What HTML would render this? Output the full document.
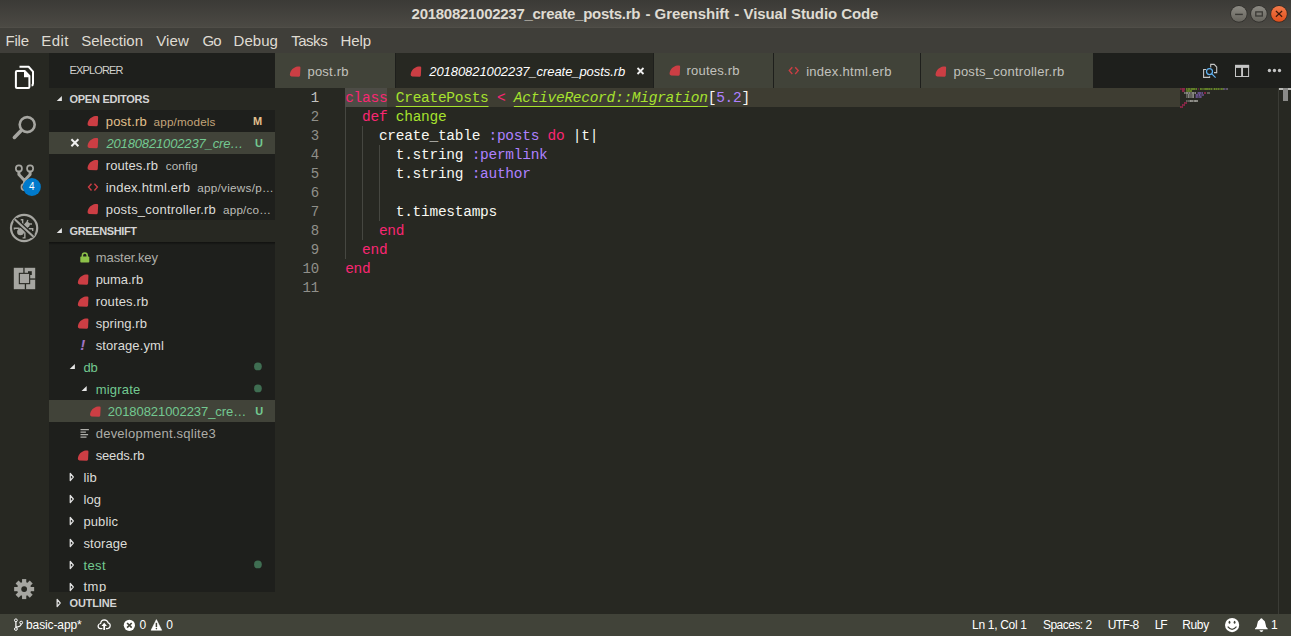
<!DOCTYPE html>
<html><head><meta charset="utf-8"><title>VS Code</title>
<style>
*{box-sizing:border-box;margin:0;padding:0}
html,body{width:1291px;height:637px;overflow:hidden;background:#272822;font-family:"Liberation Sans",sans-serif;}
#root{position:relative;width:1291px;height:637px;overflow:hidden;background:#272822}
.abs{position:absolute;display:block}
</style></head><body><div id="root">
<div class="abs" style="left:0px;top:0px;width:1291px;height:28px;background:linear-gradient(#3b3a36,#4c4a44);"></div>
<div class="abs" style="left:0px;top:27px;width:1291px;height:1px;background:#504e48;"></div>
<div class="abs" style="left:411.60px;top:0px;height:27px;line-height:27px;font:normal bold 15px/27px 'Liberation Sans';letter-spacing:-0.279px;color:#dfdbd2;white-space:pre;">20180821002237_create_posts.rb</div>
<div class="abs" style="left:645.60px;top:0px;height:27px;line-height:27px;font:normal bold 15px/27px 'Liberation Sans';letter-spacing:0.200px;color:#dfdbd2;white-space:pre;">-</div>
<div class="abs" style="left:654.50px;top:0px;height:27px;line-height:27px;font:normal bold 15px/27px 'Liberation Sans';letter-spacing:-0.032px;color:#dfdbd2;white-space:pre;">Greenshift</div>
<div class="abs" style="left:734.30px;top:0px;height:27px;line-height:27px;font:normal bold 15px/27px 'Liberation Sans';letter-spacing:0.200px;color:#dfdbd2;white-space:pre;">-</div>
<div class="abs" style="left:743.50px;top:0px;height:27px;line-height:27px;font:normal bold 15px/27px 'Liberation Sans';letter-spacing:-0.089px;color:#dfdbd2;white-space:pre;">Visual Studio Code</div>
<svg class="abs" style="left:1220px;top:0" width="71" height="28" viewBox="1220 0 71 28"><defs><linearGradient id="gb" x1="0" y1="0" x2="0" y2="1"><stop offset="0" stop-color="#8c8a83"/><stop offset="1" stop-color="#67655e"/></linearGradient><linearGradient id="gc" x1="0" y1="0" x2="0" y2="1"><stop offset="0" stop-color="#f27b4b"/><stop offset="1" stop-color="#e04f1c"/></linearGradient></defs><circle cx="1238.85" cy="13.9" r="8.55" fill="#2d2c29"/><circle cx="1238.85" cy="13.9" r="7.85" fill="url(#gb)"/><circle cx="1258.9" cy="13.9" r="8.55" fill="#2d2c29"/><circle cx="1258.9" cy="13.9" r="7.85" fill="url(#gb)"/><circle cx="1279" cy="13.9" r="8.55" fill="#33271f"/><circle cx="1279" cy="13.9" r="7.85" fill="url(#gc)"/><path d="M1235.1 14.4 H1242.8" stroke="#3a3935" stroke-width="1.4"/><rect x="1255.8" y="11.9" width="6.5" height="4.1" fill="none" stroke="#3a3935" stroke-width="1.3"/><path d="M1275.9 11 L1282.1 16.8 M1282.1 11 L1275.9 16.8" stroke="#3d1a0c" stroke-width="1.2"/></svg>
<div class="abs" style="left:0px;top:28px;width:1291px;height:25px;background:#3f3e39;"></div>
<div class="abs" style="left:5.60px;top:28px;height:25px;line-height:25px;font:normal normal 15px/25px 'Liberation Sans';letter-spacing:-0.243px;color:#dfdbd2;white-space:pre;">File</div>
<div class="abs" style="left:41.20px;top:28px;height:25px;line-height:25px;font:normal normal 15px/25px 'Liberation Sans';letter-spacing:0.435px;color:#dfdbd2;white-space:pre;">Edit</div>
<div class="abs" style="left:81.20px;top:28px;height:25px;line-height:25px;font:normal normal 15px/25px 'Liberation Sans';letter-spacing:0.020px;color:#dfdbd2;white-space:pre;">Selection</div>
<div class="abs" style="left:156.20px;top:28px;height:25px;line-height:25px;font:normal normal 15px/25px 'Liberation Sans';letter-spacing:0.138px;color:#dfdbd2;white-space:pre;">View</div>
<div class="abs" style="left:202.60px;top:28px;height:25px;line-height:25px;font:normal normal 15px/25px 'Liberation Sans';letter-spacing:-1.008px;color:#dfdbd2;white-space:pre;">Go</div>
<div class="abs" style="left:233.60px;top:28px;height:25px;line-height:25px;font:normal normal 15px/25px 'Liberation Sans';letter-spacing:0.039px;color:#dfdbd2;white-space:pre;">Debug</div>
<div class="abs" style="left:291.20px;top:28px;height:25px;line-height:25px;font:normal normal 15px/25px 'Liberation Sans';letter-spacing:-0.469px;color:#dfdbd2;white-space:pre;">Tasks</div>
<div class="abs" style="left:340.50px;top:28px;height:25px;line-height:25px;font:normal normal 15px/25px 'Liberation Sans';letter-spacing:-0.115px;color:#dfdbd2;white-space:pre;">Help</div>
<div class="abs" style="left:0px;top:53px;width:49px;height:561px;background:#272822;"></div>
<div class="abs" style="left:49px;top:53px;width:226px;height:561px;background:#1e1f1c;"></div>
<div class="abs" style="left:69.50px;top:53px;height:35px;line-height:35px;font:normal normal 11px/35px 'Liberation Sans';letter-spacing:-0.853px;color:#d0d0cc;white-space:pre;">EXPLORER</div>
<div class="abs" style="left:49px;top:88px;width:226px;height:22px;background:#272822;"></div>
<svg class="abs" style="left:56px;top:95px;overflow:visible;" width="7" height="7"><g transform="translate(0.50 0.50)"><path d="M5.4 0.4 L5.4 5.4 L0.2 5.4 Z" fill="#e6e6e6"/></g></svg>
<div class="abs" style="left:69.50px;top:88px;height:22px;line-height:22px;font:normal bold 11px/22px 'Liberation Sans';letter-spacing:-0.261px;color:#d4d4d4;white-space:pre;">OPEN EDITORS</div>
<div class="abs" style="left:49px;top:132px;width:226px;height:22px;background:#414339;"></div>
<svg class="abs" style="left:87px;top:115px;overflow:visible;" width="12" height="12"><g transform="translate(0.40 0.80)"><path d="M9.4 0.15 Q10.8 0.05 10.75 1.4 L10.35 9.2 Q10.3 10.4 9.1 10.35 L1.7 10.1 Q0 10 0.15 8.3 C0.7 4 3.8 0.8 8 0.25 Z" fill="#cc3e44"/></g></svg>
<div class="abs" style="left:105.70px;top:111px;height:22px;line-height:22px;font:normal normal 13px/22px 'Liberation Sans';letter-spacing:0.221px;color:#e2c08d;white-space:pre;">post.rb</div>
<div class="abs" style="left:153.60px;top:110.5px;height:22px;line-height:22px;font:normal normal 11.7px/22px 'Liberation Sans';letter-spacing:0.156px;color:rgba(226,192,141,0.85);white-space:pre;">app/models</div>
<div class="abs" style="left:253.00px;top:110px;height:22px;line-height:22px;font:normal bold 11px/22px 'Liberation Sans';letter-spacing:0.228px;color:#e2c08d;white-space:pre;">M</div>
<svg class="abs" style="left:70px;top:138px;overflow:visible;" width="10" height="10"><g transform="translate(0.40 0.30)"><path d="M1 1 L8 8 M8 1 L1 8" stroke="#f0f0f0" stroke-width="2"/></g></svg>
<svg class="abs" style="left:87px;top:137px;overflow:visible;" width="12" height="12"><g transform="translate(0.40 0.80)"><path d="M9.4 0.15 Q10.8 0.05 10.75 1.4 L10.35 9.2 Q10.3 10.4 9.1 10.35 L1.7 10.1 Q0 10 0.15 8.3 C0.7 4 3.8 0.8 8 0.25 Z" fill="#cc3e44"/></g></svg>
<div class="abs" style="left:106.40px;top:133px;height:22px;line-height:22px;font:italic normal 13px/22px 'Liberation Sans';letter-spacing:-0.143px;color:#73c991;white-space:pre;">20180821002237_cre…</div>
<div class="abs" style="left:255.00px;top:132px;height:22px;line-height:22px;font:normal bold 11px/22px 'Liberation Sans';letter-spacing:-0.653px;color:#73c991;white-space:pre;">U</div>
<svg class="abs" style="left:87px;top:159px;overflow:visible;" width="12" height="12"><g transform="translate(0.40 0.80)"><path d="M9.4 0.15 Q10.8 0.05 10.75 1.4 L10.35 9.2 Q10.3 10.4 9.1 10.35 L1.7 10.1 Q0 10 0.15 8.3 C0.7 4 3.8 0.8 8 0.25 Z" fill="#cc3e44"/></g></svg>
<div class="abs" style="left:105.70px;top:155px;height:22px;line-height:22px;font:normal normal 13px/22px 'Liberation Sans';letter-spacing:0.110px;color:#dcdcd8;white-space:pre;">routes.rb</div>
<div class="abs" style="left:165.70px;top:154.5px;height:22px;line-height:22px;font:normal normal 11.7px/22px 'Liberation Sans';letter-spacing:0.149px;color:#bdbdb8;white-space:pre;">config</div>
<svg class="abs" style="left:87px;top:182px;overflow:visible;" width="13" height="10"><g transform="translate(0.50 0.70)"><path d="M4 1 L1 4.4 L4 7.8 M6.9 1 L9.9 4.4 L6.9 7.8" fill="none" stroke="#cc3e44" stroke-width="1.4"/></g></svg>
<div class="abs" style="left:105.70px;top:177px;height:22px;line-height:22px;font:normal normal 13px/22px 'Liberation Sans';letter-spacing:0.210px;color:#dcdcd8;white-space:pre;">index.html.erb</div>
<div class="abs" style="left:197.20px;top:176.5px;height:22px;line-height:22px;font:normal normal 11.7px/22px 'Liberation Sans';letter-spacing:0.282px;color:#bdbdb8;white-space:pre;">app/views/p…</div>
<svg class="abs" style="left:87px;top:203px;overflow:visible;" width="12" height="12"><g transform="translate(0.40 0.80)"><path d="M9.4 0.15 Q10.8 0.05 10.75 1.4 L10.35 9.2 Q10.3 10.4 9.1 10.35 L1.7 10.1 Q0 10 0.15 8.3 C0.7 4 3.8 0.8 8 0.25 Z" fill="#cc3e44"/></g></svg>
<div class="abs" style="left:105.70px;top:199px;height:22px;line-height:22px;font:normal normal 13px/22px 'Liberation Sans';letter-spacing:0.219px;color:#dcdcd8;white-space:pre;">posts_controller.rb</div>
<div class="abs" style="left:223.00px;top:198.5px;height:22px;line-height:22px;font:normal normal 11.7px/22px 'Liberation Sans';letter-spacing:0.203px;color:#bdbdb8;white-space:pre;">app/co…</div>
<div class="abs" style="left:49px;top:220px;width:226px;height:22px;background:#272822;"></div>
<svg class="abs" style="left:56px;top:227px;overflow:visible;" width="7" height="7"><g transform="translate(0.50 0.50)"><path d="M5.4 0.4 L5.4 5.4 L0.2 5.4 Z" fill="#e6e6e6"/></g></svg>
<div class="abs" style="left:69.50px;top:220px;height:22px;line-height:22px;font:normal bold 11px/22px 'Liberation Sans';letter-spacing:-0.371px;color:#d4d4d4;white-space:pre;">GREENSHIFT</div>
<div class="abs" style="left:49px;top:242px;width:226px;height:3px;background:linear-gradient(rgba(0,0,0,0.45),rgba(0,0,0,0));"></div>
<div class="abs" style="left:49px;top:400px;width:226px;height:22px;background:#414339;"></div>
<svg class="abs" style="left:80px;top:252px;overflow:visible;" width="11" height="12"><g transform="translate(0.00 0.00)"><rect x="0.3" y="4.6" width="9" height="6" rx="0.8" fill="#8dc149"/><path d="M2.4 5 V3.4 Q2.4 0.9 4.8 0.9 Q7.2 0.9 7.2 3.4 V5" fill="none" stroke="#8dc149" stroke-width="1.5"/></g></svg>
<div class="abs" style="left:95.70px;top:247px;height:22px;line-height:22px;font:normal normal 13px/22px 'Liberation Sans';letter-spacing:-0.056px;color:#adada8;white-space:pre;">master.key</div>
<svg class="abs" style="left:77px;top:274px;overflow:visible;" width="12" height="12"><g transform="translate(0.70 0.30)"><path d="M9.4 0.15 Q10.8 0.05 10.75 1.4 L10.35 9.2 Q10.3 10.4 9.1 10.35 L1.7 10.1 Q0 10 0.15 8.3 C0.7 4 3.8 0.8 8 0.25 Z" fill="#cc3e44"/></g></svg>
<div class="abs" style="left:95.70px;top:269px;height:22px;line-height:22px;font:normal normal 13px/22px 'Liberation Sans';letter-spacing:-0.043px;color:#dcdcd8;white-space:pre;">puma.rb</div>
<svg class="abs" style="left:77px;top:296px;overflow:visible;" width="12" height="12"><g transform="translate(0.70 0.30)"><path d="M9.4 0.15 Q10.8 0.05 10.75 1.4 L10.35 9.2 Q10.3 10.4 9.1 10.35 L1.7 10.1 Q0 10 0.15 8.3 C0.7 4 3.8 0.8 8 0.25 Z" fill="#cc3e44"/></g></svg>
<div class="abs" style="left:95.70px;top:291px;height:22px;line-height:22px;font:normal normal 13px/22px 'Liberation Sans';letter-spacing:0.154px;color:#dcdcd8;white-space:pre;">routes.rb</div>
<svg class="abs" style="left:77px;top:318px;overflow:visible;" width="12" height="12"><g transform="translate(0.70 0.30)"><path d="M9.4 0.15 Q10.8 0.05 10.75 1.4 L10.35 9.2 Q10.3 10.4 9.1 10.35 L1.7 10.1 Q0 10 0.15 8.3 C0.7 4 3.8 0.8 8 0.25 Z" fill="#cc3e44"/></g></svg>
<div class="abs" style="left:95.70px;top:313px;height:22px;line-height:22px;font:normal normal 13px/22px 'Liberation Sans';letter-spacing:0.080px;color:#dcdcd8;white-space:pre;">spring.rb</div>
<div class="abs" style="left:80.30px;top:334px;height:22px;line-height:22px;font:italic bold 15px/22px 'Liberation Sans';letter-spacing:0.000px;color:#a074c4;white-space:pre;">!</div>
<div class="abs" style="left:95.70px;top:335px;height:22px;line-height:22px;font:normal normal 13px/22px 'Liberation Sans';letter-spacing:0.091px;color:#dcdcd8;white-space:pre;">storage.yml</div>
<svg class="abs" style="left:69px;top:363px;overflow:visible;" width="7" height="7"><g transform="translate(0.50 0.50)"><path d="M5.4 0.4 L5.4 5.4 L0.2 5.4 Z" fill="#e6e6e6"/></g></svg>
<div class="abs" style="left:83.40px;top:357px;height:22px;line-height:22px;font:normal normal 13px/22px 'Liberation Sans';letter-spacing:-0.134px;color:#73c991;white-space:pre;">db</div>
<svg class="abs" style="left:81px;top:385px;overflow:visible;" width="7" height="7"><g transform="translate(0.30 0.50)"><path d="M5.4 0.4 L5.4 5.4 L0.2 5.4 Z" fill="#e6e6e6"/></g></svg>
<div class="abs" style="left:95.70px;top:379px;height:22px;line-height:22px;font:normal normal 13px/22px 'Liberation Sans';letter-spacing:0.192px;color:#73c991;white-space:pre;">migrate</div>
<svg class="abs" style="left:89px;top:406px;overflow:visible;" width="12" height="12"><g transform="translate(0.90 0.30)"><path d="M9.4 0.15 Q10.8 0.05 10.75 1.4 L10.35 9.2 Q10.3 10.4 9.1 10.35 L1.7 10.1 Q0 10 0.15 8.3 C0.7 4 3.8 0.8 8 0.25 Z" fill="#cc3e44"/></g></svg>
<div class="abs" style="left:107.80px;top:401px;height:22px;line-height:22px;font:normal normal 13px/22px 'Liberation Sans';letter-spacing:-0.059px;color:#73c991;white-space:pre;">20180821002237_cre…</div>
<div class="abs" style="left:255.30px;top:400px;height:22px;line-height:22px;font:normal bold 11px/22px 'Liberation Sans';letter-spacing:-0.953px;color:#73c991;white-space:pre;">U</div>
<svg class="abs" style="left:80px;top:429px;overflow:visible;" width="10" height="10"><g transform="translate(0.50 0.00)"><path d="M0 0.6 H8.4 M0 3.1 H5.4 M0 5.6 H7.6 M0 8.1 H6" stroke="#b0b0ab" stroke-width="1.2"/></g></svg>
<div class="abs" style="left:95.70px;top:423px;height:22px;line-height:22px;font:normal normal 13px/22px 'Liberation Sans';letter-spacing:0.240px;color:#adada8;white-space:pre;">development.sqlite3</div>
<svg class="abs" style="left:77px;top:450px;overflow:visible;" width="12" height="12"><g transform="translate(0.70 0.30)"><path d="M9.4 0.15 Q10.8 0.05 10.75 1.4 L10.35 9.2 Q10.3 10.4 9.1 10.35 L1.7 10.1 Q0 10 0.15 8.3 C0.7 4 3.8 0.8 8 0.25 Z" fill="#cc3e44"/></g></svg>
<div class="abs" style="left:95.70px;top:445px;height:22px;line-height:22px;font:normal normal 13px/22px 'Liberation Sans';letter-spacing:-0.159px;color:#dcdcd8;white-space:pre;">seeds.rb</div>
<svg class="abs" style="left:69px;top:472px;overflow:visible;" width="6" height="10"><g transform="translate(0.50 0.50)"><path d="M0.75 0.9 L3.8 4.5 L0.75 8.1 Z" fill="none" stroke="#e0e0e0" stroke-width="1.25" stroke-linejoin="round"/></g></svg>
<div class="abs" style="left:83.40px;top:467px;height:22px;line-height:22px;font:normal normal 13px/22px 'Liberation Sans';letter-spacing:0.228px;color:#dcdcd8;white-space:pre;">lib</div>
<svg class="abs" style="left:69px;top:494px;overflow:visible;" width="6" height="10"><g transform="translate(0.50 0.50)"><path d="M0.75 0.9 L3.8 4.5 L0.75 8.1 Z" fill="none" stroke="#e0e0e0" stroke-width="1.25" stroke-linejoin="round"/></g></svg>
<div class="abs" style="left:83.40px;top:489px;height:22px;line-height:22px;font:normal normal 13px/22px 'Liberation Sans';letter-spacing:0.147px;color:#dcdcd8;white-space:pre;">log</div>
<svg class="abs" style="left:69px;top:516px;overflow:visible;" width="6" height="10"><g transform="translate(0.50 0.50)"><path d="M0.75 0.9 L3.8 4.5 L0.75 8.1 Z" fill="none" stroke="#e0e0e0" stroke-width="1.25" stroke-linejoin="round"/></g></svg>
<div class="abs" style="left:83.40px;top:511px;height:22px;line-height:22px;font:normal normal 13px/22px 'Liberation Sans';letter-spacing:0.122px;color:#dcdcd8;white-space:pre;">public</div>
<svg class="abs" style="left:69px;top:538px;overflow:visible;" width="6" height="10"><g transform="translate(0.50 0.50)"><path d="M0.75 0.9 L3.8 4.5 L0.75 8.1 Z" fill="none" stroke="#e0e0e0" stroke-width="1.25" stroke-linejoin="round"/></g></svg>
<div class="abs" style="left:83.40px;top:533px;height:22px;line-height:22px;font:normal normal 13px/22px 'Liberation Sans';letter-spacing:0.089px;color:#dcdcd8;white-space:pre;">storage</div>
<svg class="abs" style="left:69px;top:560px;overflow:visible;" width="6" height="10"><g transform="translate(0.50 0.50)"><path d="M0.75 0.9 L3.8 4.5 L0.75 8.1 Z" fill="none" stroke="#e0e0e0" stroke-width="1.25" stroke-linejoin="round"/></g></svg>
<div class="abs" style="left:83.40px;top:555px;height:22px;line-height:22px;font:normal normal 13px/22px 'Liberation Sans';letter-spacing:0.408px;color:#73c991;white-space:pre;">test</div>
<div class="abs" style="left:49px;top:576px;width:226px;height:16px;overflow:hidden">
<svg class="abs" style="left:20px;top:6px;overflow:visible;" width="6" height="10"><g transform="translate(0.50 0.50)"><path d="M0.75 0.9 L3.8 4.5 L0.75 8.1 Z" fill="none" stroke="#e0e0e0" stroke-width="1.25" stroke-linejoin="round"/></g></svg>
<div class="abs" style="left:34.40px;top:0px;height:22px;line-height:22px;font:normal normal 13px/22px 'Liberation Sans';letter-spacing:0.609px;color:#dcdcd8;white-space:pre;">tmp</div>
</div>
<svg class="abs" style="left:253px;top:362px;overflow:visible;" width="9" height="9"><g transform="translate(0.90 0.40)"><circle cx="4" cy="4" r="3.9" fill="#3f6e52"/></g></svg>
<svg class="abs" style="left:253px;top:384px;overflow:visible;" width="9" height="9"><g transform="translate(0.90 0.40)"><circle cx="4" cy="4" r="3.9" fill="#3f6e52"/></g></svg>
<svg class="abs" style="left:253px;top:560px;overflow:visible;" width="9" height="9"><g transform="translate(0.90 0.40)"><circle cx="4" cy="4" r="3.9" fill="#3f6e52"/></g></svg>
<div class="abs" style="left:49px;top:592px;width:226px;height:22px;background:#272822;"></div>
<svg class="abs" style="left:56px;top:598px;overflow:visible;" width="6" height="10"><g transform="translate(0.40 0.50)"><path d="M0.75 0.9 L3.8 4.5 L0.75 8.1 Z" fill="none" stroke="#e0e0e0" stroke-width="1.25" stroke-linejoin="round"/></g></svg>
<div class="abs" style="left:69.50px;top:592px;height:22px;line-height:22px;font:normal bold 11px/22px 'Liberation Sans';letter-spacing:-0.154px;color:#d4d4d4;white-space:pre;">OUTLINE</div>
<div class="abs" style="left:275px;top:53px;width:1016px;height:35px;background:#1e1f1c;"></div>
<div class="abs" style="left:275px;top:53px;width:120px;height:35px;background:#414339;"></div>
<div class="abs" style="left:395px;top:53px;width:1px;height:35px;background:#1e1f1c;"></div>
<svg class="abs" style="left:289px;top:66px;overflow:visible;" width="12" height="12"><g transform="translate(0.70 0.30)"><path d="M9.4 0.15 Q10.8 0.05 10.75 1.4 L10.35 9.2 Q10.3 10.4 9.1 10.35 L1.7 10.1 Q0 10 0.15 8.3 C0.7 4 3.8 0.8 8 0.25 Z" fill="#cc3e44"/></g></svg>
<div class="abs" style="left:307.50px;top:54px;height:35px;line-height:35px;font:normal normal 13px/35px 'Liberation Sans';letter-spacing:0.207px;color:#c2c2be;white-space:pre;">post.rb</div>
<div class="abs" style="left:396px;top:53px;width:257px;height:35px;background:#272822;"></div>
<div class="abs" style="left:653px;top:53px;width:1px;height:35px;background:#1e1f1c;"></div>
<svg class="abs" style="left:410px;top:66px;overflow:visible;" width="12" height="12"><g transform="translate(0.50 0.30)"><path d="M9.4 0.15 Q10.8 0.05 10.75 1.4 L10.35 9.2 Q10.3 10.4 9.1 10.35 L1.7 10.1 Q0 10 0.15 8.3 C0.7 4 3.8 0.8 8 0.25 Z" fill="#cc3e44"/></g></svg>
<div class="abs" style="left:429.30px;top:54px;height:35px;line-height:35px;font:italic normal 13px/35px 'Liberation Sans';letter-spacing:-0.075px;color:#ffffff;white-space:pre;">20180821002237_create_posts.rb</div>
<svg class="abs" style="left:636px;top:67px;overflow:visible;" width="9" height="9"><g transform="translate(0.50 0.00)"><path d="M1 1 L7 7 M7 1 L1 7" stroke="#f0f0f0" stroke-width="1.8"/></g></svg>
<div class="abs" style="left:654px;top:53px;width:119px;height:35px;background:#414339;"></div>
<svg class="abs" style="left:669px;top:65px;overflow:visible;" width="12" height="12"><g transform="translate(0.40 0.30)"><path d="M9.4 0.15 Q10.8 0.05 10.75 1.4 L10.35 9.2 Q10.3 10.4 9.1 10.35 L1.7 10.1 Q0 10 0.15 8.3 C0.7 4 3.8 0.8 8 0.25 Z" fill="#cc3e44"/></g></svg>
<div class="abs" style="left:686.50px;top:53px;height:35px;line-height:35px;font:normal normal 13px/35px 'Liberation Sans';letter-spacing:0.199px;color:#c2c2be;white-space:pre;">routes.rb</div>
<div class="abs" style="left:774px;top:53px;width:146px;height:35px;background:#414339;"></div>
<svg class="abs" style="left:788px;top:66px;overflow:visible;" width="13" height="10"><g transform="translate(0.30 0.20)"><path d="M4 1 L1 4.4 L4 7.8 M6.9 1 L9.9 4.4 L6.9 7.8" fill="none" stroke="#cc3e44" stroke-width="1.4"/></g></svg>
<div class="abs" style="left:806.20px;top:54px;height:35px;line-height:35px;font:normal normal 13px/35px 'Liberation Sans';letter-spacing:0.275px;color:#c2c2be;white-space:pre;">index.html.erb</div>
<div class="abs" style="left:921px;top:53px;width:172px;height:35px;background:#414339;"></div>
<svg class="abs" style="left:935px;top:66px;overflow:visible;" width="12" height="12"><g transform="translate(0.40 0.30)"><path d="M9.4 0.15 Q10.8 0.05 10.75 1.4 L10.35 9.2 Q10.3 10.4 9.1 10.35 L1.7 10.1 Q0 10 0.15 8.3 C0.7 4 3.8 0.8 8 0.25 Z" fill="#cc3e44"/></g></svg>
<div class="abs" style="left:953.40px;top:54px;height:35px;line-height:35px;font:normal normal 13px/35px 'Liberation Sans';letter-spacing:0.261px;color:#c2c2be;white-space:pre;">posts_controller.rb</div>
<div class="abs" style="left:345px;top:88px;width:835px;height:19px;background:#3e3d32;"></div>
<div class="abs" style="left:345px;top:88px;width:42px;height:19px;background:#4d4c46;"></div>
<div class="abs" style="left:345px;top:107px;width:1px;height:152px;background:#464741;"></div>
<div class="abs" style="left:362px;top:126px;width:1px;height:114px;background:#464741;"></div>
<div class="abs" style="left:379px;top:145px;width:1px;height:76px;background:#464741;"></div>
<div class="abs" style="left:275px;width:44.2px;top:89px;text-align:right;font:14px/19px 'Liberation Mono';color:#c2c2bf">1</div>
<div class="abs" style="left:275px;width:44.2px;top:108px;text-align:right;font:14px/19px 'Liberation Mono';color:#90908a">2</div>
<div class="abs" style="left:275px;width:44.2px;top:127px;text-align:right;font:14px/19px 'Liberation Mono';color:#90908a">3</div>
<div class="abs" style="left:275px;width:44.2px;top:146px;text-align:right;font:14px/19px 'Liberation Mono';color:#90908a">4</div>
<div class="abs" style="left:275px;width:44.2px;top:165px;text-align:right;font:14px/19px 'Liberation Mono';color:#90908a">5</div>
<div class="abs" style="left:275px;width:44.2px;top:184px;text-align:right;font:14px/19px 'Liberation Mono';color:#90908a">6</div>
<div class="abs" style="left:275px;width:44.2px;top:203px;text-align:right;font:14px/19px 'Liberation Mono';color:#90908a">7</div>
<div class="abs" style="left:275px;width:44.2px;top:222px;text-align:right;font:14px/19px 'Liberation Mono';color:#90908a">8</div>
<div class="abs" style="left:275px;width:44.2px;top:241px;text-align:right;font:14px/19px 'Liberation Mono';color:#90908a">9</div>
<div class="abs" style="left:275px;width:44.2px;top:260px;text-align:right;font:14px/19px 'Liberation Mono';color:#90908a">10</div>
<div class="abs" style="left:275px;width:44.2px;top:279px;text-align:right;font:14px/19px 'Liberation Mono';color:#90908a">11</div>
<div class="abs" style="left:345.2px;top:89px;font:14.5px/19px 'Liberation Mono';letter-spacing:-0.272px;white-space:pre;color:#f8f8f2"><span style="color:#f92672;">class</span> <span style="color:#a6e22e;text-decoration:underline;text-underline-offset:4px;text-decoration-thickness:1px;">CreatePosts</span> <span style="color:#f92672;">&lt;</span> <span style="color:#a6e22e;font-style:italic;text-decoration:underline;text-underline-offset:4px;text-decoration-thickness:1px;">ActiveRecord::Migration</span><span style="color:#f8f8f2;">[</span><span style="color:#ae81ff;">5.2</span><span style="color:#f8f8f2;">]</span></div>
<div class="abs" style="left:345.2px;top:108px;font:14.5px/19px 'Liberation Mono';letter-spacing:-0.272px;white-space:pre;color:#f8f8f2">  <span style="color:#f92672;">def</span> <span style="color:#a6e22e;">change</span></div>
<div class="abs" style="left:345.2px;top:127px;font:14.5px/19px 'Liberation Mono';letter-spacing:-0.272px;white-space:pre;color:#f8f8f2">    <span style="color:#f8f8f2;">create_table </span><span style="color:#ae81ff;">:posts</span> <span style="color:#f92672;">do</span><span style="color:#f8f8f2;"> |t|</span></div>
<div class="abs" style="left:345.2px;top:146px;font:14.5px/19px 'Liberation Mono';letter-spacing:-0.272px;white-space:pre;color:#f8f8f2">      <span style="color:#f8f8f2;">t.string </span><span style="color:#ae81ff;">:permlink</span></div>
<div class="abs" style="left:345.2px;top:165px;font:14.5px/19px 'Liberation Mono';letter-spacing:-0.272px;white-space:pre;color:#f8f8f2">      <span style="color:#f8f8f2;">t.string </span><span style="color:#ae81ff;">:author</span></div>
<div class="abs" style="left:345.2px;top:184px;font:14.5px/19px 'Liberation Mono';letter-spacing:-0.272px;white-space:pre;color:#f8f8f2"></div>
<div class="abs" style="left:345.2px;top:203px;font:14.5px/19px 'Liberation Mono';letter-spacing:-0.272px;white-space:pre;color:#f8f8f2">      <span style="color:#f8f8f2;">t.timestamps</span></div>
<div class="abs" style="left:345.2px;top:222px;font:14.5px/19px 'Liberation Mono';letter-spacing:-0.272px;white-space:pre;color:#f8f8f2">    <span style="color:#f92672;">end</span></div>
<div class="abs" style="left:345.2px;top:241px;font:14.5px/19px 'Liberation Mono';letter-spacing:-0.272px;white-space:pre;color:#f8f8f2">  <span style="color:#f92672;">end</span></div>
<div class="abs" style="left:345.2px;top:260px;font:14.5px/19px 'Liberation Mono';letter-spacing:-0.272px;white-space:pre;color:#f8f8f2"><span style="color:#f92672;">end</span></div>
<div class="abs" style="left:345.2px;top:279px;font:14.5px/19px 'Liberation Mono';letter-spacing:-0.272px;white-space:pre;color:#f8f8f2"></div>
<svg class="abs" style="left:1180px;top:88px" width="60" height="22" viewBox="0 0 60 22" shape-rendering="crispEdges"><rect x="0" y="0" width="1" height="2" fill="#f92672" opacity="0.37"/><rect x="1" y="0" width="1" height="2" fill="#f92672" opacity="0.28"/><rect x="2" y="0" width="1" height="2" fill="#f92672" opacity="0.46"/><rect x="3" y="0" width="1" height="2" fill="#f92672" opacity="0.46"/><rect x="4" y="0" width="1" height="2" fill="#f92672" opacity="0.46"/><rect x="6" y="0" width="1" height="2" fill="#a6e22e" opacity="0.46"/><rect x="7" y="0" width="1" height="2" fill="#a6e22e" opacity="0.28"/><rect x="8" y="0" width="1" height="2" fill="#a6e22e" opacity="0.46"/><rect x="9" y="0" width="1" height="2" fill="#a6e22e" opacity="0.46"/><rect x="10" y="0" width="1" height="2" fill="#a6e22e" opacity="0.28"/><rect x="11" y="0" width="1" height="2" fill="#a6e22e" opacity="0.46"/><rect x="12" y="0" width="1" height="2" fill="#a6e22e" opacity="0.46"/><rect x="13" y="0" width="1" height="2" fill="#a6e22e" opacity="0.46"/><rect x="14" y="0" width="1" height="2" fill="#a6e22e" opacity="0.46"/><rect x="15" y="0" width="1" height="2" fill="#a6e22e" opacity="0.28"/><rect x="16" y="0" width="1" height="2" fill="#a6e22e" opacity="0.46"/><rect x="18" y="0" width="1" height="2" fill="#f92672" opacity="0.28"/><rect x="20" y="0" width="1" height="2" fill="#a6e22e" opacity="0.46"/><rect x="21" y="0" width="1" height="2" fill="#a6e22e" opacity="0.37"/><rect x="22" y="0" width="1" height="2" fill="#a6e22e" opacity="0.28"/><rect x="23" y="0" width="1" height="2" fill="#a6e22e" opacity="0.28"/><rect x="24" y="0" width="1" height="2" fill="#a6e22e" opacity="0.37"/><rect x="25" y="0" width="1" height="2" fill="#a6e22e" opacity="0.46"/><rect x="26" y="0" width="1" height="2" fill="#a6e22e" opacity="0.46"/><rect x="27" y="0" width="1" height="2" fill="#a6e22e" opacity="0.46"/><rect x="28" y="0" width="1" height="2" fill="#a6e22e" opacity="0.37"/><rect x="29" y="0" width="1" height="2" fill="#a6e22e" opacity="0.46"/><rect x="30" y="0" width="1" height="2" fill="#a6e22e" opacity="0.28"/><rect x="31" y="0" width="1" height="2" fill="#a6e22e" opacity="0.46"/><rect x="32" y="0" width="1" height="2" fill="#a6e22e" opacity="0.19"/><rect x="33" y="0" width="1" height="2" fill="#a6e22e" opacity="0.19"/><rect x="34" y="0" width="1" height="2" fill="#a6e22e" opacity="0.53"/><rect x="35" y="0" width="1" height="2" fill="#a6e22e" opacity="0.28"/><rect x="36" y="0" width="1" height="2" fill="#a6e22e" opacity="0.46"/><rect x="37" y="0" width="1" height="2" fill="#a6e22e" opacity="0.28"/><rect x="38" y="0" width="1" height="2" fill="#a6e22e" opacity="0.46"/><rect x="39" y="0" width="1" height="2" fill="#a6e22e" opacity="0.28"/><rect x="40" y="0" width="1" height="2" fill="#a6e22e" opacity="0.28"/><rect x="41" y="0" width="1" height="2" fill="#a6e22e" opacity="0.46"/><rect x="42" y="0" width="1" height="2" fill="#a6e22e" opacity="0.37"/><rect x="43" y="0" width="1" height="2" fill="#f8f8f2" opacity="0.28"/><rect x="44" y="0" width="1" height="2" fill="#ae81ff" opacity="0.37"/><rect x="45" y="0" width="1" height="2" fill="#ae81ff" opacity="0.19"/><rect x="46" y="0" width="1" height="2" fill="#ae81ff" opacity="0.37"/><rect x="47" y="0" width="1" height="2" fill="#f8f8f2" opacity="0.28"/><rect x="2" y="2" width="1" height="2" fill="#f92672" opacity="0.46"/><rect x="3" y="2" width="1" height="2" fill="#f92672" opacity="0.46"/><rect x="4" y="2" width="1" height="2" fill="#f92672" opacity="0.28"/><rect x="6" y="2" width="1" height="2" fill="#a6e22e" opacity="0.37"/><rect x="7" y="2" width="1" height="2" fill="#a6e22e" opacity="0.37"/><rect x="8" y="2" width="1" height="2" fill="#a6e22e" opacity="0.46"/><rect x="9" y="2" width="1" height="2" fill="#a6e22e" opacity="0.37"/><rect x="10" y="2" width="1" height="2" fill="#a6e22e" opacity="0.46"/><rect x="11" y="2" width="1" height="2" fill="#a6e22e" opacity="0.46"/><rect x="4" y="4" width="1" height="2" fill="#f8f8f2" opacity="0.37"/><rect x="5" y="4" width="1" height="2" fill="#f8f8f2" opacity="0.28"/><rect x="6" y="4" width="1" height="2" fill="#f8f8f2" opacity="0.46"/><rect x="7" y="4" width="1" height="2" fill="#f8f8f2" opacity="0.46"/><rect x="8" y="4" width="1" height="2" fill="#f8f8f2" opacity="0.28"/><rect x="9" y="4" width="1" height="2" fill="#f8f8f2" opacity="0.46"/><rect x="10" y="4" width="1" height="2" fill="#f8f8f2" opacity="0.28"/><rect x="11" y="4" width="1" height="2" fill="#f8f8f2" opacity="0.28"/><rect x="12" y="4" width="1" height="2" fill="#f8f8f2" opacity="0.46"/><rect x="13" y="4" width="1" height="2" fill="#f8f8f2" opacity="0.46"/><rect x="14" y="4" width="1" height="2" fill="#f8f8f2" opacity="0.28"/><rect x="15" y="4" width="1" height="2" fill="#f8f8f2" opacity="0.46"/><rect x="17" y="4" width="1" height="2" fill="#ae81ff" opacity="0.19"/><rect x="18" y="4" width="1" height="2" fill="#ae81ff" opacity="0.46"/><rect x="19" y="4" width="1" height="2" fill="#ae81ff" opacity="0.46"/><rect x="20" y="4" width="1" height="2" fill="#ae81ff" opacity="0.46"/><rect x="21" y="4" width="1" height="2" fill="#ae81ff" opacity="0.28"/><rect x="22" y="4" width="1" height="2" fill="#ae81ff" opacity="0.46"/><rect x="24" y="4" width="1" height="2" fill="#f92672" opacity="0.46"/><rect x="25" y="4" width="1" height="2" fill="#f92672" opacity="0.46"/><rect x="27" y="4" width="1" height="2" fill="#f8f8f2" opacity="0.28"/><rect x="28" y="4" width="1" height="2" fill="#f8f8f2" opacity="0.28"/><rect x="29" y="4" width="1" height="2" fill="#f8f8f2" opacity="0.28"/><rect x="6" y="6" width="1" height="2" fill="#f8f8f2" opacity="0.28"/><rect x="7" y="6" width="1" height="2" fill="#f8f8f2" opacity="0.19"/><rect x="8" y="6" width="1" height="2" fill="#f8f8f2" opacity="0.46"/><rect x="9" y="6" width="1" height="2" fill="#f8f8f2" opacity="0.28"/><rect x="10" y="6" width="1" height="2" fill="#f8f8f2" opacity="0.28"/><rect x="11" y="6" width="1" height="2" fill="#f8f8f2" opacity="0.28"/><rect x="12" y="6" width="1" height="2" fill="#f8f8f2" opacity="0.37"/><rect x="13" y="6" width="1" height="2" fill="#f8f8f2" opacity="0.46"/><rect x="15" y="6" width="1" height="2" fill="#ae81ff" opacity="0.19"/><rect x="16" y="6" width="1" height="2" fill="#ae81ff" opacity="0.46"/><rect x="17" y="6" width="1" height="2" fill="#ae81ff" opacity="0.46"/><rect x="18" y="6" width="1" height="2" fill="#ae81ff" opacity="0.28"/><rect x="19" y="6" width="1" height="2" fill="#ae81ff" opacity="0.53"/><rect x="20" y="6" width="1" height="2" fill="#ae81ff" opacity="0.28"/><rect x="21" y="6" width="1" height="2" fill="#ae81ff" opacity="0.28"/><rect x="22" y="6" width="1" height="2" fill="#ae81ff" opacity="0.37"/><rect x="23" y="6" width="1" height="2" fill="#ae81ff" opacity="0.37"/><rect x="6" y="8" width="1" height="2" fill="#f8f8f2" opacity="0.28"/><rect x="7" y="8" width="1" height="2" fill="#f8f8f2" opacity="0.19"/><rect x="8" y="8" width="1" height="2" fill="#f8f8f2" opacity="0.46"/><rect x="9" y="8" width="1" height="2" fill="#f8f8f2" opacity="0.28"/><rect x="10" y="8" width="1" height="2" fill="#f8f8f2" opacity="0.28"/><rect x="11" y="8" width="1" height="2" fill="#f8f8f2" opacity="0.28"/><rect x="12" y="8" width="1" height="2" fill="#f8f8f2" opacity="0.37"/><rect x="13" y="8" width="1" height="2" fill="#f8f8f2" opacity="0.46"/><rect x="15" y="8" width="1" height="2" fill="#ae81ff" opacity="0.19"/><rect x="16" y="8" width="1" height="2" fill="#ae81ff" opacity="0.46"/><rect x="17" y="8" width="1" height="2" fill="#ae81ff" opacity="0.37"/><rect x="18" y="8" width="1" height="2" fill="#ae81ff" opacity="0.28"/><rect x="19" y="8" width="1" height="2" fill="#ae81ff" opacity="0.37"/><rect x="20" y="8" width="1" height="2" fill="#ae81ff" opacity="0.46"/><rect x="21" y="8" width="1" height="2" fill="#ae81ff" opacity="0.28"/><rect x="6" y="12" width="1" height="2" fill="#f8f8f2" opacity="0.28"/><rect x="7" y="12" width="1" height="2" fill="#f8f8f2" opacity="0.19"/><rect x="8" y="12" width="1" height="2" fill="#f8f8f2" opacity="0.28"/><rect x="9" y="12" width="1" height="2" fill="#f8f8f2" opacity="0.28"/><rect x="10" y="12" width="1" height="2" fill="#f8f8f2" opacity="0.53"/><rect x="11" y="12" width="1" height="2" fill="#f8f8f2" opacity="0.46"/><rect x="12" y="12" width="1" height="2" fill="#f8f8f2" opacity="0.46"/><rect x="13" y="12" width="1" height="2" fill="#f8f8f2" opacity="0.28"/><rect x="14" y="12" width="1" height="2" fill="#f8f8f2" opacity="0.46"/><rect x="15" y="12" width="1" height="2" fill="#f8f8f2" opacity="0.53"/><rect x="16" y="12" width="1" height="2" fill="#f8f8f2" opacity="0.46"/><rect x="17" y="12" width="1" height="2" fill="#f8f8f2" opacity="0.46"/><rect x="4" y="14" width="1" height="2" fill="#f92672" opacity="0.46"/><rect x="5" y="14" width="1" height="2" fill="#f92672" opacity="0.37"/><rect x="6" y="14" width="1" height="2" fill="#f92672" opacity="0.46"/><rect x="2" y="16" width="1" height="2" fill="#f92672" opacity="0.46"/><rect x="3" y="16" width="1" height="2" fill="#f92672" opacity="0.37"/><rect x="4" y="16" width="1" height="2" fill="#f92672" opacity="0.46"/><rect x="0" y="18" width="1" height="2" fill="#f92672" opacity="0.46"/><rect x="1" y="18" width="1" height="2" fill="#f92672" opacity="0.37"/><rect x="2" y="18" width="1" height="2" fill="#f92672" opacity="0.46"/></svg>
<div class="abs" style="left:1278px;top:88px;width:1px;height:526px;background:#3b3c36;"></div>
<div class="abs" style="left:1279px;top:88px;width:12px;height:2px;background:#b9b9b6;"></div>
<div class="abs" style="left:1283px;top:88px;width:5px;height:13px;background:#8a8a88;"></div>
<div class="abs" style="left:0px;top:614px;width:1291px;height:22px;background:#414339;"></div>
<div class="abs" style="left:0px;top:636px;width:1291px;height:1px;background:#ffffff;"></div>
<div class="abs" style="left:26.00px;top:614px;height:22px;line-height:22px;font:normal normal 12px/22px 'Liberation Sans';letter-spacing:-0.110px;color:#ffffff;white-space:pre;">basic-app*</div>
<div class="abs" style="left:139.40px;top:614px;height:22px;line-height:22px;font:normal normal 12px/22px 'Liberation Sans';letter-spacing:-0.888px;color:#ffffff;white-space:pre;">0</div>
<div class="abs" style="left:166.20px;top:614px;height:22px;line-height:22px;font:normal normal 12px/22px 'Liberation Sans';letter-spacing:-0.887px;color:#ffffff;white-space:pre;">0</div>
<div class="abs" style="left:972.10px;top:614px;height:22px;line-height:22px;font:normal normal 12px/22px 'Liberation Sans';letter-spacing:-0.322px;color:#ffffff;white-space:pre;">Ln 1, Col 1</div>
<div class="abs" style="left:1042.90px;top:614px;height:22px;line-height:22px;font:normal normal 12px/22px 'Liberation Sans';letter-spacing:-0.508px;color:#ffffff;white-space:pre;">Spaces: 2</div>
<div class="abs" style="left:1107.70px;top:614px;height:22px;line-height:22px;font:normal normal 12px/22px 'Liberation Sans';letter-spacing:-0.620px;color:#ffffff;white-space:pre;">UTF-8</div>
<div class="abs" style="left:1154.70px;top:614px;height:22px;line-height:22px;font:normal normal 12px/22px 'Liberation Sans';letter-spacing:-1.108px;color:#ffffff;white-space:pre;">LF</div>
<div class="abs" style="left:1182.20px;top:614px;height:22px;line-height:22px;font:normal normal 12px/22px 'Liberation Sans';letter-spacing:-0.329px;color:#ffffff;white-space:pre;">Ruby</div>
<div class="abs" style="left:1271.00px;top:614px;height:22px;line-height:22px;font:normal normal 12px/22px 'Liberation Sans';letter-spacing:-2.188px;color:#ffffff;white-space:pre;">1</div>
<svg class="abs" style="left:0;top:0" width="1291" height="637" viewBox="0 0 1291 637">
<!-- files icon -->
<g fill="none" stroke="#ffffff" stroke-width="2" stroke-linejoin="round">
<path d="M19.5 66.8 H28.6 L33 71.6 V83.6 Q33 85.4 31.6 85.6"/>
<path d="M17 70.9 H24.6 L29.4 76 V86.9 Q29.4 88 28.3 88 H17 Q15.9 88 15.9 86.9 V72 Q15.9 70.9 17 70.9 Z"/>
</g>
<path d="M24 71 V77.2 H29.6 Z" fill="#ffffff"/>
<!-- search icon -->
<g fill="none" stroke="#a6a6a1">
<circle cx="27.2" cy="124.6" r="7.5" stroke-width="2.6"/>
<path d="M21.2 130.6 L14.4 137.4" stroke-width="3.6" stroke-linecap="round"/>
</g>
<!-- git icon -->
<g fill="none" stroke="#a6a6a1">
<path d="M18.9 171.8 V174.6 L24.5 180.6 L30.1 174.6 V171.8 M24.5 180 V184" stroke-width="3" stroke-linejoin="round"/>
<circle cx="18.9" cy="168.4" r="3.05" stroke-width="1.7"/>
<circle cx="30.1" cy="168.4" r="3.05" stroke-width="1.7"/>
<circle cx="24.5" cy="187" r="3.05" stroke-width="1.7"/>
</g>
<circle cx="31.9" cy="187" r="9" fill="#007acc"/>
<!-- debug icon -->
<g fill="none" stroke="#a6a6a1">
<circle cx="24.1" cy="228" r="13.1" stroke-width="2.2"/>
</g>
<g transform="translate(24.1 228)">
<g fill="#a6a6a1" stroke="none">
<circle cx="-3.7" cy="4" r="3.3"/>
<path d="M-6 1.7 L-1.4 -2.2 L2.4 1.6 L-1.4 6.3 Z"/>
<circle cx="3.2" cy="-3.4" r="2.5"/>
<path d="M1.4 -5.2 L-1 -2.6 L2.6 1 L5 -1.7 Z"/>
</g>
<g fill="none" stroke="#a6a6a1" stroke-width="1.4">
<path d="M-3.4 -8.2 H-1.45 V-3.5"/>
<path d="M4.6 -4 H7.9"/>
<path d="M2.6 -5 L3.7 -8"/>
<path d="M4.6 0.8 H8.6 V3"/>
<path d="M-4.5 0.2 H-9.7 V1.6"/>
<path d="M0.75 4 V9.9 H-1.5"/>
</g>
<path d="M-9.4 -8.75 L9.4 8.65" stroke="#272822" stroke-width="4.6"/>
<path d="M-9.4 -8.75 L9.4 8.65" stroke="#a6a6a1" stroke-width="2.1"/>
</g>
<!-- extensions icon -->
<g>
<rect x="13.8" y="267.8" width="21.4" height="21.4" fill="#a6a6a1"/>
<rect x="23.3" y="267.3" width="1.3" height="6" fill="#272822"/>
<rect x="24.8" y="283.5" width="1.3" height="6.2" fill="#272822"/>
<rect x="30" y="278.4" width="5.7" height="1.3" fill="#272822"/>
<rect x="28" y="271.2" width="3.8" height="3.8" fill="#272822"/>
<rect x="18.8" y="272.8" width="11.4" height="11.4" fill="#272822"/>
<rect x="19.9" y="273.9" width="9.2" height="9.2" fill="#a6a6a1"/>
</g>
<!-- gear -->
<g transform="translate(24.15 589.1)" fill="#a6a6a1">
<circle r="7.1"/>
<rect x="-2.1" y="-10" width="4.2" height="20"/>
<rect x="-2.1" y="-10" width="4.2" height="20" transform="rotate(45)"/>
<rect x="-2.1" y="-10" width="4.2" height="20" transform="rotate(90)"/>
<rect x="-2.1" y="-10" width="4.2" height="20" transform="rotate(135)"/>
<circle r="2.9" fill="#272822"/>
</g>
<!-- editor actions -->
<g fill="none" stroke="#c5c5c5" stroke-width="1.1">
<path d="M1210.7 67.5 V64.4 H1214.2 L1216.7 67 V72.6 H1214"/>
<path d="M1206 69.5 H1203.6 V77.4 H1209.6 V76.2"/>
</g>
<g fill="none" stroke="#62b4f4" stroke-width="1.2">
<circle cx="1209.5" cy="71.6" r="3"/>
<path d="M1211.8 73.9 L1215.6 77.6"/>
</g>
<g fill="none" stroke="#c5c5c5">
<rect x="1235.5" y="65.4" width="13.1" height="11.1" stroke-width="1"/>
<path d="M1235 66.4 H1249.1" stroke-width="3"/>
<path d="M1242.05 66 V77" stroke-width="1.9"/>
</g>
<g fill="#c5c5c5">
<circle cx="1269.4" cy="70.5" r="1.65"/><circle cx="1274.45" cy="70.5" r="1.65"/><circle cx="1279.5" cy="70.5" r="1.65"/>
</g>
<!-- status: branch -->
<g fill="none" stroke="#ffffff" stroke-width="1">
<circle cx="15.9" cy="620.3" r="1.4"/>
<circle cx="15.9" cy="629" r="1.4"/>
<circle cx="21.2" cy="622.6" r="1.4"/>
<path d="M15.9 621.7 V627.6 M21.2 624 Q21 626.4 16 627.4" stroke-width="1.2"/>
</g>
<!-- status: cloud upload -->
<g fill="none" stroke="#ffffff" stroke-width="1.2">
<path d="M102.4 628.6 H100.6 Q98 628.4 98.1 625.9 Q98.3 623.8 100.6 623.5 Q101.2 620 104.4 619.9 Q107.4 620 108.2 622.9 Q110.3 623.4 110.2 625.8 Q110 628.4 107.6 628.6 H106"/>
</g>
<path d="M104.2 622.8 L107 626 H105.1 V630 H103.3 V626 H101.4 Z" fill="#ffffff"/>
<!-- status: error -->
<circle cx="129.4" cy="625.3" r="5.6" fill="#ffffff"/>
<path d="M127.1 623 L131.7 627.6 M131.7 623 L127.1 627.6" stroke="#414339" stroke-width="1.7"/>
<!-- status: warning -->
<path d="M156.4 619.6 L161.7 630.2 H151.1 Z" fill="#ffffff" stroke="#ffffff" stroke-width="0.6" stroke-linejoin="round"/>
<path d="M156.4 622.8 V627" stroke="#414339" stroke-width="1.5"/>
<circle cx="156.4" cy="628.6" r="0.8" fill="#414339"/>
<!-- smiley -->
<circle cx="1232.1" cy="625.1" r="7.1" fill="#ffffff"/>
<ellipse cx="1229.5" cy="622.2" rx="0.9" ry="1.5" fill="#414339"/>
<ellipse cx="1234.6" cy="622.2" rx="0.9" ry="1.5" fill="#414339"/>
<path d="M1227.7 626.6 Q1232.1 632 1236.5 626.6" fill="none" stroke="#414339" stroke-width="1.2"/>
<!-- bell -->
<path d="M1261.4 618.2 Q1262.6 618.5 1262.8 619.4 Q1265.4 620.6 1265.6 624.2 Q1265.8 627.6 1267.7 628.6 V629.3 H1255 V628.6 Q1257 627.6 1257.2 624.2 Q1257.4 620.6 1260 619.4 Q1260.2 618.5 1261.4 618.2 Z" fill="#ffffff"/>
<path d="M1259.4 630.3 H1263.4 Q1262.8 632 1261.4 632 Q1260 632 1259.4 630.3 Z" fill="#ffffff"/>
</svg>
<div class="abs" style="left:22.9px;top:178px;width:18px;height:18px;line-height:18px;text-align:center;font:10px/18px 'Liberation Sans';color:#fff">4</div>

</div></body></html>
